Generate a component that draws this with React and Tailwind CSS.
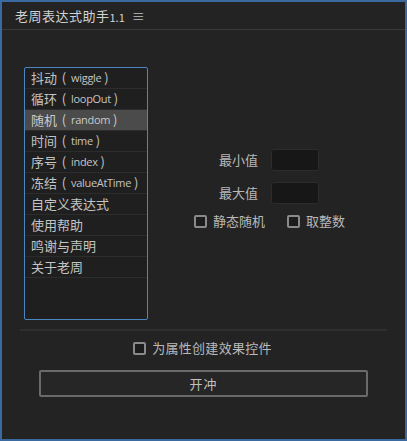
import React, { useState } from 'react';

const items = [
  { zh: '抖动', en: 'wiggle' },
  { zh: '循环', en: 'loopOut' },
  { zh: '随机', en: 'random' },
  { zh: '时间', en: 'time' },
  { zh: '序号', en: 'index' },
  { zh: '冻结', en: 'valueAtTime' },
  { zh: '自定义表达式' },
  { zh: '使用帮助' },
  { zh: '鸣谢与声明' },
  { zh: '关于老周' },
];

const Box = ({ checked, onClick }) => (
  <span
    onClick={onClick}
    className="w-[13px] h-[13px] rounded-[2px] border-2 border-[#8a8a8a] bg-[#1c1c1c] shrink-0 flex items-center justify-center"
  >
    {checked && <span className="w-[5px] h-[5px] bg-[#bdbdbd]" />}
  </span>
);

const App = () => {
  const [selected, setSelected] = useState(2);
  const [staticRand, setStaticRand] = useState(false);
  const [integer, setInteger] = useState(false);
  const [effect, setEffect] = useState(false);

  return (
    <div
      className="w-[407px] h-[441px] bg-[#232323] border-2 border-[#3a6aa0] flex flex-col text-[#b9b9b9] overflow-hidden"
      style={{ fontFamily: '"Noto Sans CJK SC", "Noto Sans", sans-serif' }}
    >
      {/* Title bar */}
      <div className="h-[28px] shrink-0 border-b border-[#3a3a3a] flex items-center pl-[13px] pt-[1px]">
        <span className="text-[13px] text-[#d2d2d2] tracking-[0.5px]">老周表达式助手</span>
        <span className="text-[11px] text-[#d2d2d2] mt-[2px]">1.1</span>
        <span className="text-[13px] text-[#c0c0c0] ml-[7px]">≡</span>
      </div>

      {/* Main */}
      <div className="flex shrink-0 pt-[37px] pl-[22px] h-[299px]">
        {/* List */}
        <div className="w-[124px] h-[253px] border border-[#4a86c4] rounded-[2px] bg-[#1f1f1f] flex flex-col overflow-hidden">
          {items.map((it, i) => (
            <div
              key={i}
              onClick={() => setSelected(i)}
              className={`h-[21px] shrink-0 flex items-center pl-[6px] border-b border-[#2c2c2c] whitespace-nowrap text-[13px] ${
                selected === i ? 'bg-[#4b4b4b] text-[#c9c9c9]' : 'text-[#c4c4c4]'
              }`}
            >
              <span>{it.zh}</span>
              {it.en && (
                <span className="flex items-center">
                  <span className="w-[14px] text-center">(</span>
                  <span
                    className="text-[11px] tracking-[-0.3px]"
                    style={{ fontFamily: '"Open Sans", "Noto Sans", sans-serif' }}
                  >
                    {it.en}
                  </span>
                  <span className="w-[10px] text-center">)</span>
                </span>
              )}
            </div>
          ))}
        </div>

        {/* Params */}
        <div className="flex flex-col pl-[46px] pt-[82px] text-[13px]">
          <div className="flex items-center h-[22px]">
            <span className="w-[64px] text-right">最小值</span>
            <span className="ml-[13px] w-[48px] h-[22px] bg-[#171717] border border-[#2c2c2c] rounded-[3px]" />
          </div>
          <div className="flex items-center h-[22px] mt-[11px]">
            <span className="w-[64px] text-right">最大值</span>
            <span className="ml-[13px] w-[48px] h-[22px] bg-[#171717] border border-[#2c2c2c] rounded-[3px]" />
          </div>
          <div className="flex items-center h-[16px] mt-[9px]">
            <Box checked={staticRand} onClick={() => setStaticRand(!staticRand)} />
            <span className="ml-[6px]">静态随机</span>
            <span className="ml-[22px]">
              <Box checked={integer} onClick={() => setInteger(!integer)} />
            </span>
            <span className="ml-[6px]">取整数</span>
          </div>
        </div>
      </div>

      {/* Separator */}
      <div className="mx-[18px] h-[2px] bg-[#2f2f2f] shrink-0" />

      {/* Effect checkbox */}
      <div className="flex items-center justify-center h-[32px] mt-[1px] text-[13px] pr-[2px]">
        <Box checked={effect} onClick={() => setEffect(!effect)} />
        <span className="ml-[6px] tracking-[0.3px]">为属性创建效果控件</span>
      </div>

      {/* Button */}
      <div className="pl-[37px] mt-[6px]">
        <button className="w-[329px] h-[27px] border-2 border-[#6a6a6a] rounded-[2px] bg-[#262626] text-[13px] text-[#c0c0c0] tracking-[1px] flex items-center justify-center">
          开冲
        </button>
      </div>
    </div>
  );
};

export default App;
